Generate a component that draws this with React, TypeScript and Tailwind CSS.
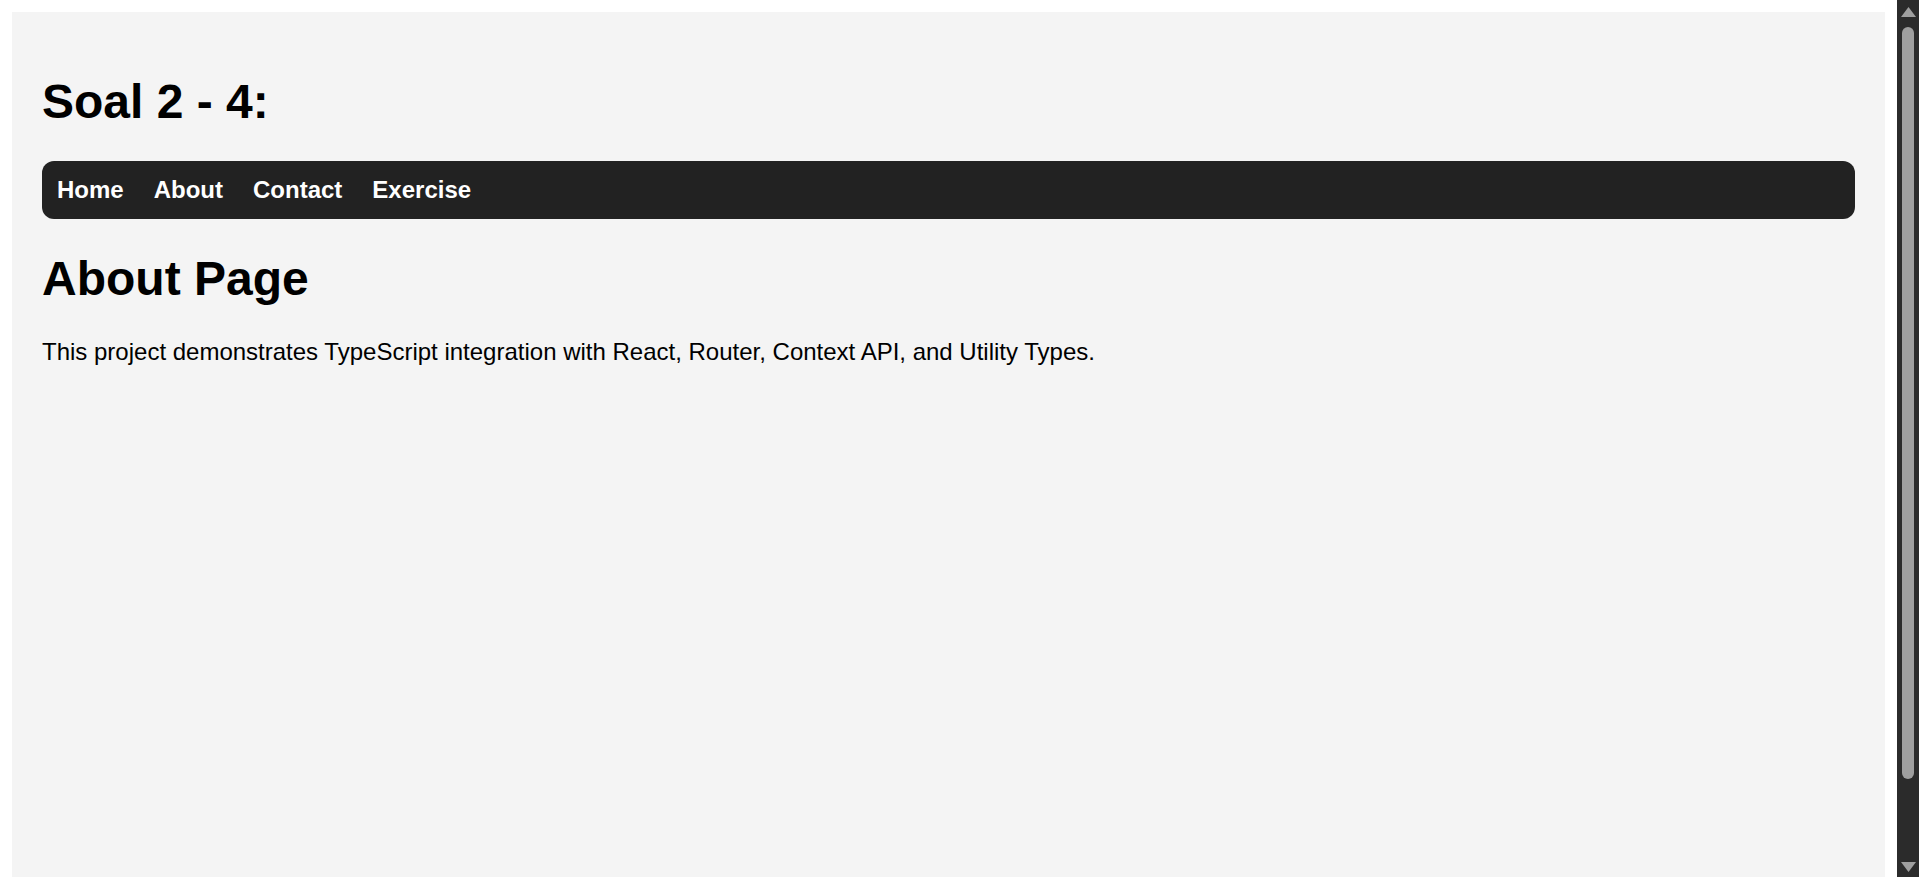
const links = ["Home", "About", "Contact", "Exercise"];

function Scrollbar() {
  // the browser's dark scrollbar as seen in the screenshot
  return (
    <div
      aria-hidden
      className="fixed top-0 right-0 flex h-screen w-[22px] flex-col items-center bg-[#2b2b2b] pt-[7px] pb-[5px]"
    >
      <svg width="15" height="10" viewBox="0 0 15 10">
        <polygon points="7.5,0 15,10 0,10" fill="#9f9f9f" />
      </svg>
      <div className="mt-[10px] h-[752px] w-[12px] rounded-full bg-[#9f9f9f]" />
      <div className="flex-1" />
      <svg width="15" height="10" viewBox="0 0 15 10">
        <polygon points="0,0 15,0 7.5,10" fill="#9f9f9f" />
      </svg>
    </div>
  );
}

export default function App() {
  return (
    <>
      <div className="mr-[22px] bg-white p-3 font-['Liberation_Sans',Arial,sans-serif] text-black">
        <div className="box-content min-h-screen bg-[#f4f4f4] p-[30px]">
          <h1 className="my-[32px] text-[48px] leading-[normal] font-bold">Soal 2 - 4:</h1>

          {/* Navbar */}
          <nav className="flex gap-[30px] rounded-[12px] bg-[#222222] p-[15px]">
            {links.map((l) => (
              <a key={l} href="#" className="text-[24px] leading-[normal] font-bold text-white">
                {l}
              </a>
            ))}
          </nav>

          {/* Page */}
          <h1 className="my-[32px] text-[48px] leading-[normal] font-bold">About Page</h1>
          <p className="my-[24px] text-[24px] leading-[normal]">
            This project demonstrates TypeScript integration with React, Router, Context API, and Utility Types.
          </p>
        </div>
      </div>
      <Scrollbar />
    </>
  );
}
